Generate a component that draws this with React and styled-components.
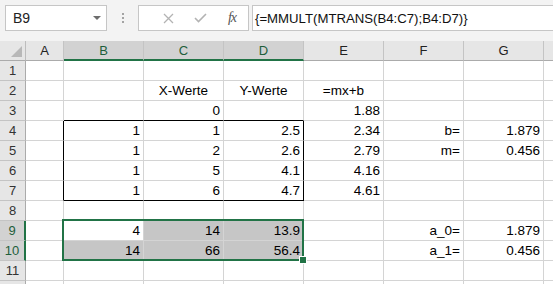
import styled, { createGlobalStyle } from "styled-components";

const GlobalStyle = createGlobalStyle`
  html, body {
    margin: 0;
    padding: 0;
    background: #ffffff;
  }
  body {
    font-family: "Liberation Sans", Arial, sans-serif;
  }
`;

const Window = styled.div`
  width: 553px;
  height: 284px;
  overflow: hidden;
  display: flex;
  flex-direction: column;
  background: #ffffff;
`;

const FormulaBar = styled.div`
  flex: none;
  height: 41px;
  box-sizing: border-box;
  padding: 5px 0 0 5px;
  display: flex;
  align-items: flex-start;
  background: #f3f3f3;
`;

const NameBox = styled.div`
  width: 102px;
  height: 26px;
  box-sizing: border-box;
  border: 1px solid #c6c6c6;
  background: #ffffff;
  display: flex;
  align-items: center;
  justify-content: space-between;
  padding: 0 5px 0 7px;
  font-size: 14px;
  color: #222222;
`;

const DropArrow = styled.span`
  width: 0;
  height: 0;
  border-left: 4px solid transparent;
  border-right: 4px solid transparent;
  border-top: 4px solid #6d6d6d;
`;

const Grip = styled.div`
  width: 31px;
  height: 26px;
  display: flex;
  flex-direction: column;
  align-items: center;
  justify-content: center;
  gap: 2px;
`;

const GripDot = styled.span`
  width: 2px;
  height: 2px;
  background: #a3a3a3;
`;

const Controls = styled.div`
  width: 111px;
  height: 26px;
  box-sizing: border-box;
  border: 1px solid #c6c6c6;
  background: #ffffff;
  display: flex;
  align-items: center;
  padding-left: 13px;
`;

const IconSlot = styled.span`
  width: 35px;
  height: 24px;
  display: flex;
  align-items: center;
  justify-content: center;
`;

const Fx = styled.span`
  font-family: "Liberation Serif", "Times New Roman", serif;
  font-style: italic;
  font-size: 14px;
  color: #555555;
  letter-spacing: -1px;
`;

const FormulaInput = styled.div`
  flex: 1;
  margin-left: 3px;
  height: 26px;
  box-sizing: border-box;
  border: 1px solid #c6c6c6;
  border-right: none;
  background: #ffffff;
  display: flex;
  align-items: center;
  padding-left: 2px;
  font-size: 13.2px;
  color: #111111;
  white-space: nowrap;
`;

const Sheet = styled.div`
  display: grid;
  grid-template-columns: 26px 38px repeat(6, 80px) 80px;
  grid-auto-rows: 20px;
`;

const Corner = styled.div`
  box-sizing: border-box;
  background: #e6e6e6;
  border-right: 1px solid #bdbdbd;
  border-bottom: 1px solid #ababab;
  display: flex;
  align-items: flex-end;
  justify-content: flex-end;
  padding: 0 3px 3px 0;
`;

const CornerTriangle = styled.span`
  width: 0;
  height: 0;
  border-left: 11px solid transparent;
  border-bottom: 11px solid #b8b8b8;
`;

const ColHead = styled.div`
  box-sizing: border-box;
  background: ${(p) => (p.$selected ? "#d2d2d2" : "#e6e6e6")};
  border-right: 1px solid #c4c4c4;
  border-bottom: ${(p) => (p.$selected ? "2px solid #217346" : "1px solid #ababab")};
  color: ${(p) => (p.$selected ? "#1e5e3b" : "#222222")};
  font-size: 13px;
  line-height: 19px;
  text-align: center;
`;

const RowHead = styled.div`
  box-sizing: border-box;
  background: ${(p) => (p.$selected ? "#d2d2d2" : "#e6e6e6")};
  border-right: ${(p) => (p.$selected ? "2px solid #217346" : "1px solid #ababab")};
  border-bottom: 1px solid #c4c4c4;
  color: ${(p) => (p.$selected ? "#1e5e3b" : "#333333")};
  font-size: 13px;
  line-height: 19px;
  text-align: center;
`;

const Cell = styled.div`
  position: relative;
  box-sizing: border-box;
  border-right: 1px solid ${(p) => (p.$darkRight ? "#000000" : "#d4d4d4")};
  border-bottom: 1px solid ${(p) => (p.$darkBottom ? "#000000" : "#d4d4d4")};
  background: ${(p) => (p.$shade ? "#c6c6c6" : "#ffffff")};
  padding: 0 3px;
  text-align: ${(p) => p.$align};
  font-size: 13.5px;
  line-height: 19px;
  color: #000000;
  white-space: nowrap;
`;

const Selection = styled.div`
  position: absolute;
  top: -2px;
  left: -2px;
  width: 242px;
  height: 42px;
  box-sizing: border-box;
  border: 2px solid #217346;
  pointer-events: none;
  z-index: 2;
`;

const FillHandle = styled.span`
  position: absolute;
  right: -5px;
  bottom: -5px;
  width: 6px;
  height: 6px;
  background: #217346;
  border: 1px solid #ffffff;
`;

// H is only a sliver at the right edge, its letter is off screen
const COLS = ["A", "B", "C", "D", "E", "F", "G", "H"];
const VISIBLE_LABEL = ["A", "B", "C", "D", "E", "F", "G"];
const SELECTED_COLS = ["B", "C", "D"];

const DATA = {
  2: { C: ["X-Werte", "center"], D: ["Y-Werte", "center"], E: ["=mx+b", "center"] },
  3: { C: ["0"], E: ["1.88"] },
  4: { B: ["1"], C: ["1"], D: ["2.5"], E: ["2.34"], F: ["b="], G: ["1.879"] },
  5: { B: ["1"], C: ["2"], D: ["2.6"], E: ["2.79"], F: ["m="], G: ["0.456"] },
  6: { B: ["1"], C: ["5"], D: ["4.1"], E: ["4.16"] },
  7: { B: ["1"], C: ["6"], D: ["4.7"], E: ["4.61"] },
  9: { B: ["4"], C: ["14"], D: ["13.9"], F: ["a_0="], G: ["1.879"] },
  10: { B: ["14"], C: ["66"], D: ["56.4"], F: ["a_1="], G: ["0.456"] },
};

const ROWS = Array.from({ length: 12 }, (_, i) => i + 1);

const inBox = (r) => r >= 4 && r <= 7;
const inSel = (r, c) => (r === 9 || r === 10) && SELECTED_COLS.includes(c);

const CrossIcon = () => (
  <svg width="11" height="11" viewBox="0 0 11 11">
    <path d="M1 1L10 10M10 1L1 10" stroke="#b3b3b3" strokeWidth="1.3" fill="none" />
  </svg>
);

const CheckIcon = () => (
  <svg width="13" height="10" viewBox="0 0 13 10">
    <path d="M1 5L4.5 8.5L12 1" stroke="#b3b3b3" strokeWidth="1.6" fill="none" />
  </svg>
);

const App = () => {
  return (
    <Window>
      <GlobalStyle />
      <FormulaBar>
        <NameBox>
          B9
          <DropArrow />
        </NameBox>
        <Grip>
          <GripDot />
          <GripDot />
          <GripDot />
        </Grip>
        <Controls>
          <IconSlot>
            <CrossIcon />
          </IconSlot>
          <IconSlot>
            <CheckIcon />
          </IconSlot>
          <IconSlot>
            <Fx>fx</Fx>
          </IconSlot>
        </Controls>
        <FormulaInput>{"{=MMULT(MTRANS(B4:C7);B4:D7)}"}</FormulaInput>
      </FormulaBar>

      <Sheet>
        <Corner>
          <CornerTriangle />
        </Corner>
        {COLS.map((c) => (
          <ColHead key={c} $selected={SELECTED_COLS.includes(c)}>
            {VISIBLE_LABEL.includes(c) ? c : ""}
          </ColHead>
        ))}
        {ROWS.map((r) => [
          <RowHead key={`h${r}`} $selected={r === 9 || r === 10}>
            {r <= 11 ? r : ""}
          </RowHead>,
          ...COLS.map((c) => {
            const entry = DATA[r] && DATA[r][c];
            const darkRight = inBox(r) && (c === "A" || c === "D");
            const darkBottom = (r === 3 || r === 7) && ["B", "C", "D"].includes(c);
            const shade = inSel(r, c) && !(r === 9 && c === "B");
            return (
              <Cell
                key={`${c}${r}`}
                $align={entry && entry[1] ? entry[1] : "right"}
                $darkRight={darkRight}
                $darkBottom={darkBottom}
                $shade={shade}
              >
                {entry ? entry[0] : ""}
                {r === 9 && c === "B" && (
                  <Selection>
                    <FillHandle />
                  </Selection>
                )}
              </Cell>
            );
          }),
        ])}
      </Sheet>
    </Window>
  );
};

export default App;
